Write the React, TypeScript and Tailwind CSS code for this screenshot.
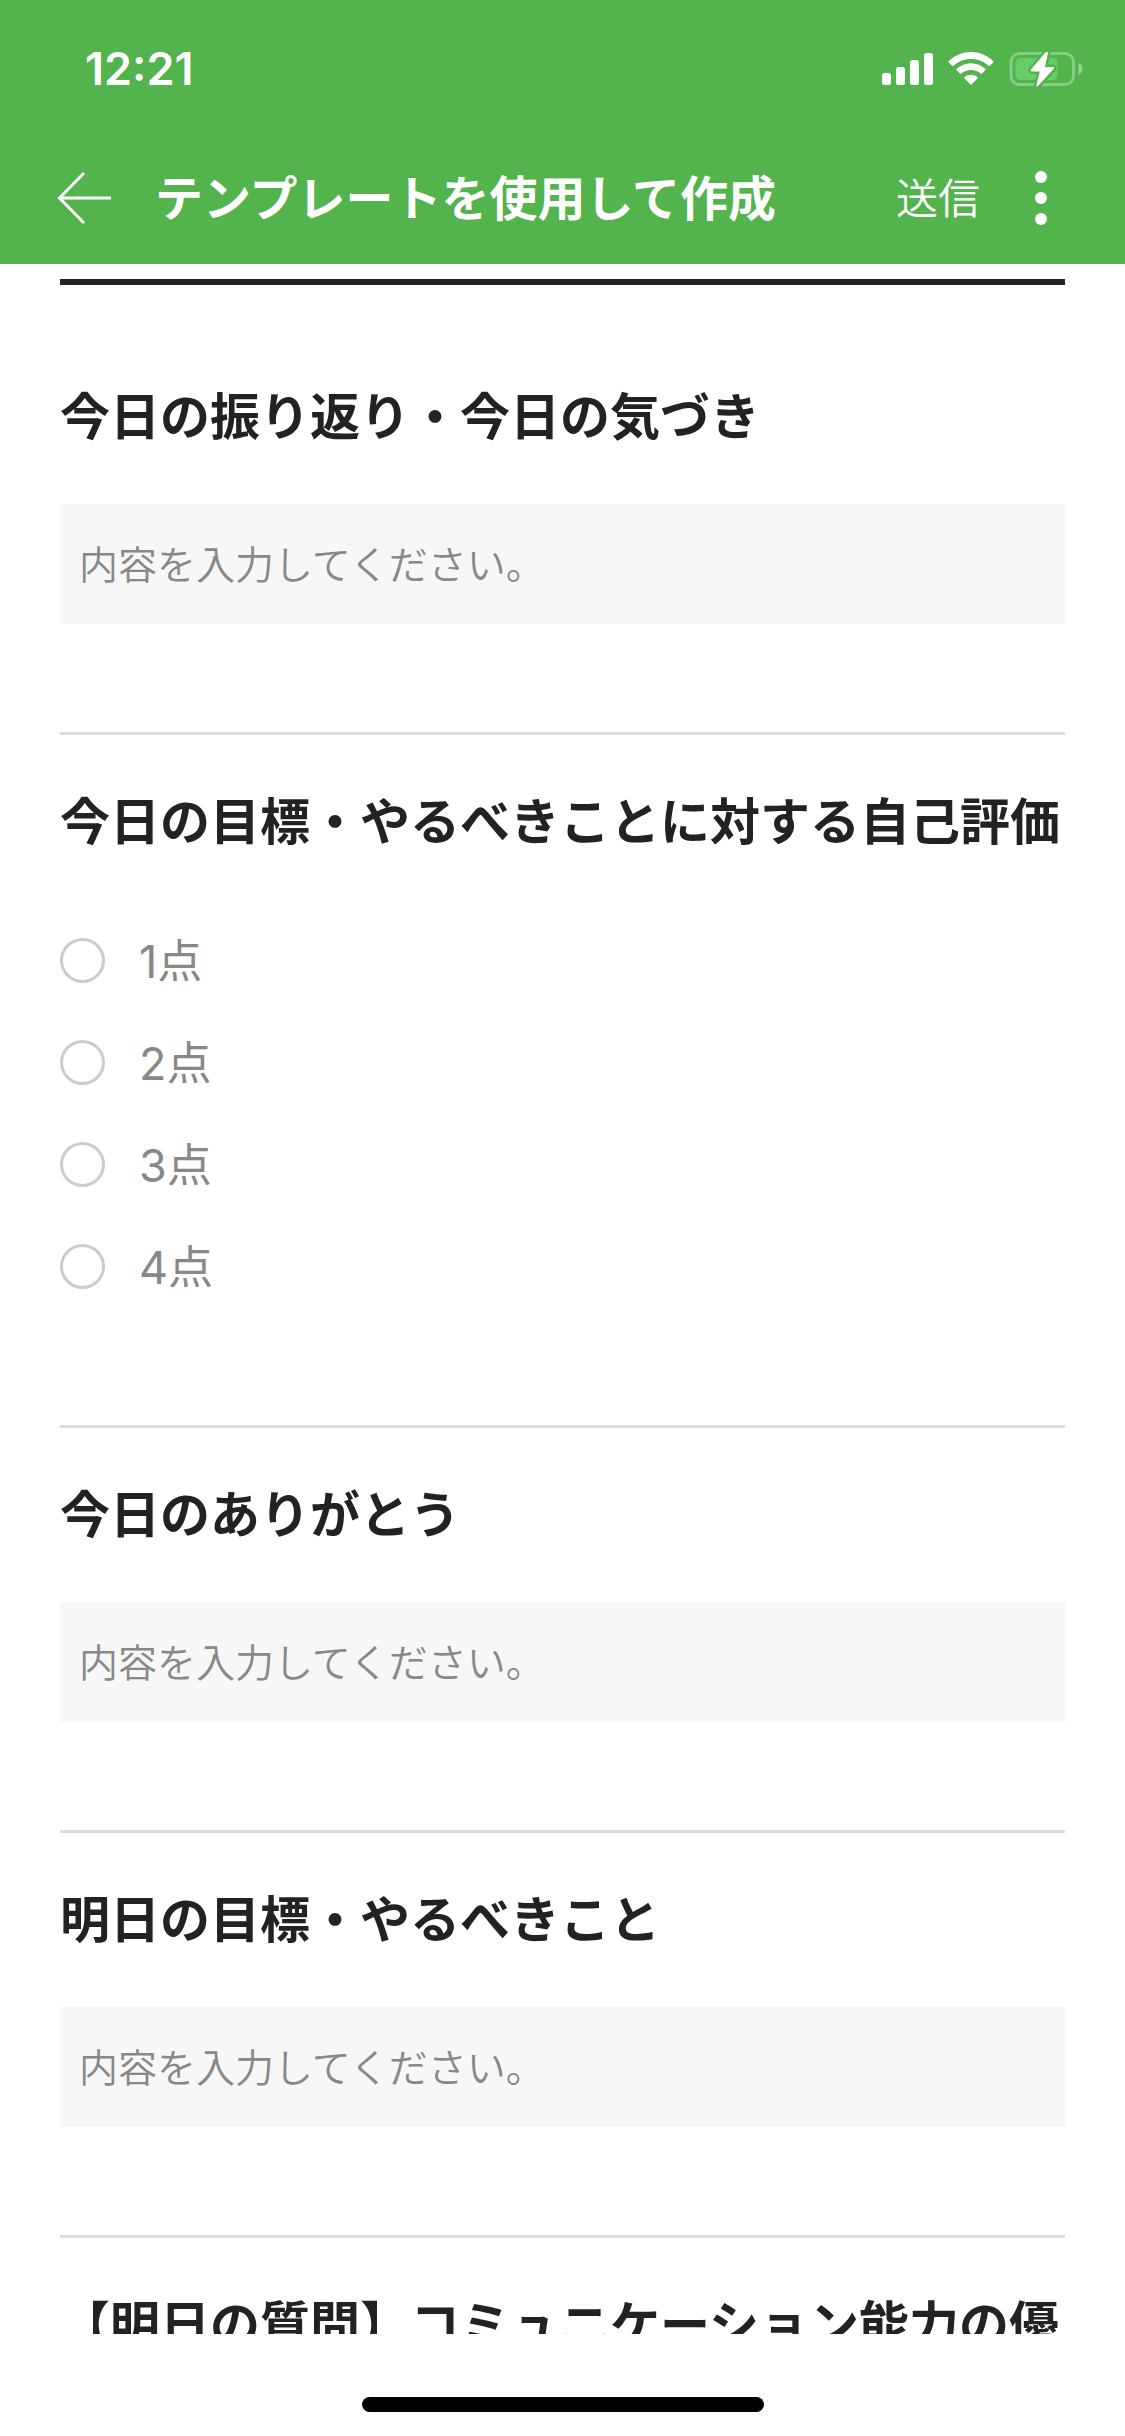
import React, { useState } from "react";

type Question = {
  id: string;
  title: string;
  options?: string[];
};

const questions: Question[] = [
  { id: "reflection", title: "今日の振り返り・今日の気づき" },
  {
    id: "score",
    title: "今日の目標・やるべきことに対する自己評価",
    options: ["1点", "2点", "3点", "4点"],
  },
  { id: "thanks", title: "今日のありがとう" },
  { id: "tomorrow", title: "明日の目標・やるべきこと" },
  { id: "question", title: "【明日の質問】コミュニケーション能力の優" },
];

function StatusIcons() {
  return (
    <div className="flex items-center gap-[15px]">
      {/* signal */}
      <svg width="51" height="36" viewBox="0 0 51 36" fill="#fff" aria-hidden="true">
        <rect x="0" y="22" width="9" height="12" rx="2.5" />
        <rect x="14" y="16" width="9" height="18" rx="2.5" />
        <rect x="28" y="9" width="9" height="25" rx="2.5" />
        <rect x="42" y="2" width="9" height="32" rx="2.5" />
      </svg>
      {/* wifi */}
      <svg width="46" height="36" viewBox="0 0 46 36" fill="#fff" aria-hidden="true">
        <path d="M23 1C14.400 1 6.600 4.400 0.900 9.900Q0.100 10.700 0.900 11.500L4 14.700Q4.700 15.400 5.500 14.700C10.100 10.500 16.200 8 23 8S35.900 10.500 40.500 14.700Q41.300 15.400 42 14.700L45.100 11.500Q45.900 10.700 45.100 9.900C39.400 4.400 31.600 1 23 1Z" />
        <path d="M23 12.200C17.500 12.200 12.500 14.300 8.700 17.700Q7.900 18.500 8.700 19.300L11.900 22.500Q12.600 23.200 13.400 22.600C16 20.400 19.300 19.100 23 19.100S30 20.400 32.600 22.600Q33.400 23.200 34.100 22.500L37.300 19.300Q38.100 18.500 37.300 17.700C33.500 14.300 28.500 12.200 23 12.200Z" />
        <path d="M23 23.800C20.600 23.800 18.400 24.600 16.700 25.900Q15.900 26.600 16.600 27.400L22.200 33.300Q23 34.100 23.800 33.300L29.400 27.400Q30.100 26.600 29.300 25.900C27.600 24.600 25.400 23.800 23 23.800Z" />
      </svg>
      {/* battery, charging */}
      <svg width="74" height="36" viewBox="0 0 74 36" aria-hidden="true">
        <rect x="2" y="2.500" width="62.500" height="31" rx="8.500" fill="none" stroke="#86cd86" strokeWidth="3" />
        <path d="M69.500 12v12c2.300-1 4-3.300 4-6s-1.700-5-4-6z" fill="#93d293" />
        <rect x="6.500" y="7" width="42" height="22" rx="4.500" fill="#67cd66" />
        <path
          d="M36.600 1.200L22 18.600q-1 1.700 1 1.900h7.800L27.400 34q-.2 2.200 1.600 1L44.700 17.800q1-1.800-1-1.900h-7.800L39 2.300Q39 .2 36.600 1.200z"
          fill="#fff"
          stroke="#53b34c"
          strokeWidth="5"
          paintOrder="stroke"
        />
      </svg>
    </div>
  );
}

function Header() {
  return (
    <header className="shrink-0 bg-[#53b34c] text-white">
      <div className="flex h-[132px] items-center justify-between pt-[6px] pr-[42px] pl-[85px]">
        <time className="font-['Inter',sans-serif] text-[45px] leading-[60px] font-semibold">12:21</time>
        <StatusIcons />
      </div>
      <div className="flex h-[132px] items-center pr-[63px] pl-[57px]">
        <button type="button" aria-label="戻る" className="mr-[43px]">
          <svg width="55" height="54" viewBox="0 0 55 54" fill="none" stroke="#fff" strokeWidth="3" aria-hidden="true">
            <path d="M54 27H3M27 2L2.500 27L27 52" />
          </svg>
        </button>
        <h1 className="flex-1 pt-[2px] text-[48px] leading-[60px] font-bold">テンプレートを使用して作成</h1>
        <button type="button" className="pt-[2px] text-[42px] leading-[60px] font-[350]">
          送信
        </button>
        <button type="button" aria-label="メニュー" className="ml-[40px]">
          <svg width="42" height="54" viewBox="0 0 42 54" fill="#fff" aria-hidden="true">
            <circle cx="21" cy="6" r="6" />
            <circle cx="21" cy="27" r="6" />
            <circle cx="21" cy="48" r="6" />
          </svg>
        </button>
      </div>
    </header>
  );
}

export default function App() {
  const [answers, setAnswers] = useState<Record<string, string>>({});

  function setAnswer(id: string, value: string) {
    setAnswers((a) => ({ ...a, [id]: value }));
  }

  return (
    <div className="flex h-screen flex-col overflow-hidden bg-white font-['Inter','Noto_Sans_CJK_JP',sans-serif] text-[#222]">
      <Header />

      <main className="min-h-0 flex-1 overflow-hidden px-[60px] pt-[15px]">
        <hr className="mb-[45px] border-t-[6px] border-[#222]" />
        <form className="divide-y-[3px] divide-[#dcdcdc]">
          {questions.map((q) => (
            <section key={q.id} className="pt-[57px] pb-[108px]">
              <h2 id={`${q.id}-title`} className="mb-[57px] text-[50px] leading-[60px] font-bold whitespace-nowrap">
                {q.title}
              </h2>
              {q.options ? (
                <div role="radiogroup" aria-labelledby={`${q.id}-title`}>
                  {q.options.map((option) => (
                    <label key={option} className="flex h-[102px] items-center gap-[34px] text-[45px] text-[#888]">
                      <input
                        type="radio"
                        name={q.id}
                        value={option}
                        checked={answers[q.id] === option}
                        onChange={() => setAnswer(q.id, option)}
                        className="size-[45px] appearance-none rounded-full border-[3px] border-[#ccc] checked:border-[12px] checked:border-[#53b34c]"
                      />
                      <span className="pt-1 leading-[60px] font-normal">{option}</span>
                    </label>
                  ))}
                </div>
              ) : (
                <input
                  type="text"
                  aria-labelledby={`${q.id}-title`}
                  placeholder="内容を入力してください。"
                  value={answers[q.id] ?? ""}
                  onChange={(e) => setAnswer(q.id, e.target.value)}
                  className="block h-[120px] w-full bg-[#f7f7f7] px-[19px] text-[39px] font-[350] placeholder:text-[#888]"
                />
              )}
            </section>
          ))}
        </form>
      </main>

      {/* home indicator */}
      <footer className="flex h-[102px] shrink-0 items-end justify-center pb-[24px]">
        <div className="h-[15px] w-[402px] rounded-full bg-black" />
      </footer>
    </div>
  );
}
